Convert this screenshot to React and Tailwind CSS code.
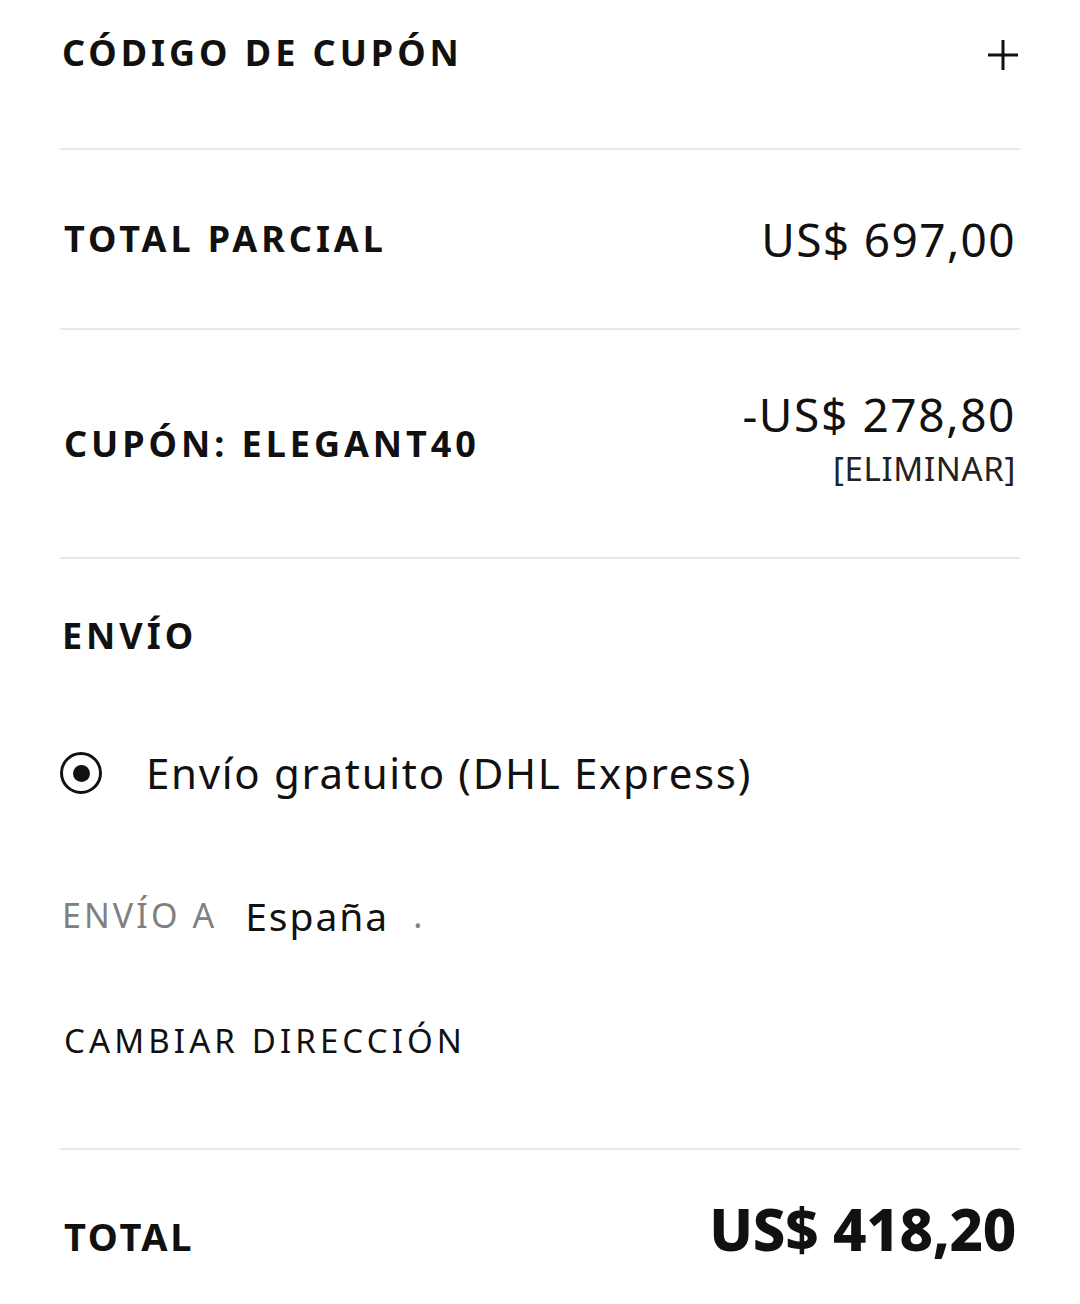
export default function App() {
  const f = { fontFamily: '"Noto Sans", "Open Sans", sans-serif' };
  return (
    <div className="w-[1080px] h-[1304px] bg-white px-[60px] text-[#111]" style={f}>
      {/* Coupon code */}
      <div className="h-[150px] border-b-2 border-[#e8e8e8]">
        <div className="h-[106px] flex items-center justify-between pl-[2px] pr-[2px]">
          <span className="text-[36px] leading-none font-bold tracking-[0.11em]">CÓDIGO DE CUPÓN</span>
          <svg width="34" height="34" viewBox="0 0 34 34" className="mr-[-2px] mt-[4px]">
            <path d="M17 2 V32 M2 17 H32" stroke="#111" strokeWidth="3" />
          </svg>
        </div>
      </div>
      {/* Subtotal */}
      <div className="h-[180px] border-b-2 border-[#e8e8e8] flex items-center justify-between pl-[4px] pr-[4px]">
        <span className="text-[36px] leading-none font-bold tracking-[0.11em]">TOTAL PARCIAL</span>
        <span className="text-[46px] leading-none tracking-[0.03em]">US$ 697,00</span>
      </div>
      {/* Coupon */}
      <div className="h-[229px] border-b-2 border-[#e8e8e8] flex items-center justify-between pl-[4px] pr-[4px]">
        <span className="text-[36px] leading-none font-bold tracking-[0.11em]">CUPÓN: ELEGANT40</span>
        <div className="flex flex-col items-end mb-[12px]">
          <span className="text-[46px] leading-none tracking-[0.035em]">-US$ 278,80</span>
          <span className="text-[33px] leading-none mt-[15px] tracking-[0.02em] text-[#222]">[ELIMINAR]</span>
        </div>
      </div>
      {/* Shipping */}
      <div className="h-[591px] border-b-2 border-[#e8e8e8] flex flex-col">
        <div className="h-[154px] flex items-center pl-[2px]">
          <span className="text-[36px] leading-none font-bold tracking-[0.11em]">ENVÍO</span>
        </div>
        <div className="h-[120px] flex items-center">
          <div className="w-[42px] h-[42px] rounded-full border-[3px] border-[#111] flex items-center justify-center">
            <div className="w-[17px] h-[17px] rounded-full bg-[#111]" />
          </div>
          <span className="ml-[44px] text-[42px] leading-none tracking-[0.04em]">Envío gratuito (DHL Express)</span>
        </div>
        <div className="h-[164px] flex items-center pl-[2px]">
          <span className="text-[34px] leading-none tracking-[0.09em] text-[#808080]">ENVÍO A</span>
          <span className="ml-[28px] text-[39px] leading-none tracking-[0.05em]">España</span>
          <span className="ml-[24px] text-[34px] leading-none text-[#808080]">.</span>
        </div>
        <div className="h-[86px] flex items-center pl-[4px]">
          <span className="text-[33px] leading-none tracking-[0.125em]">CAMBIAR DIRECCIÓN</span>
        </div>
      </div>
      {/* Total */}
      <div className="h-[152px] flex items-baseline justify-between pl-[4px] pr-[4px] pt-[50px]">
        <span className="text-[38px] leading-none font-bold tracking-[0.07em]">TOTAL</span>
        <span className="text-[58px] leading-none font-extrabold tracking-[-0.005em]">US$ 418,20</span>
      </div>
    </div>
  );
}
